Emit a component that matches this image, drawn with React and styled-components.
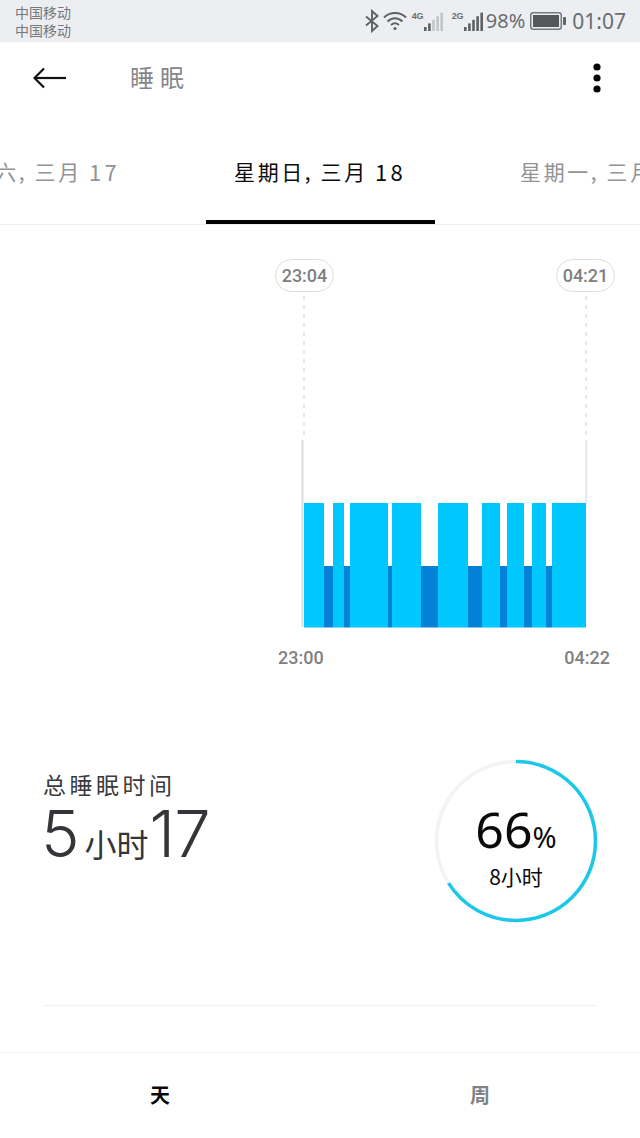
import React from 'react';
import styled, { createGlobalStyle } from 'styled-components';

const CJK = '"Noto Sans CJK SC", "Noto Sans", sans-serif';

const Global = createGlobalStyle`
  html, body { margin: 0; padding: 0; background: #fff; }
  body { font-family: ${CJK}; }
  * { box-sizing: border-box; }
`;

const Page = styled.div`
  width: 640px;
  height: 1138px;
  display: flex;
  flex-direction: column;
  overflow: hidden;
  background: #fff;
`;

/* status bar */
const StatusBar = styled.div`
  height: 42px;
  flex: none;
  background: #eceef1;
  display: flex;
  align-items: center;
  justify-content: space-between;
  padding: 0 14px 0 15px;
  color: #6b6d70;
`;
const Carriers = styled.div`
  display: flex;
  flex-direction: column;
  font-size: 14px;
  line-height: 18px;
  color: #77797c;
`;
const StatusRight = styled.div`
  display: flex;
  align-items: center;
  height: 42px;
`;
const NetLabel = styled.span`
  font-family: "Liberation Sans", sans-serif;
  font-size: 9px;
  font-weight: 700;
  line-height: 9px;
  width: 12px;
  letter-spacing: -0.3px;
  align-self: flex-start;
  margin-top: 12px;
  margin-left: ${p => p.$gap || 0}px;
`;
const Glyph = styled.svg`
  display: block;
  flex: none;
  margin: 0 ${p => p.$mr || 0}px 0 ${p => p.$ml || 0}px;
`;
const Percent = styled.span`
  font-family: "Noto Sans", sans-serif;
  font-size: 20px;
  line-height: 42px;
  margin: 0 5px 0 2px;
`;
const Clock = styled.span`
  font-family: "Noto Sans", sans-serif;
  font-size: 21px;
  line-height: 42px;
  margin-left: 6px;
`;

/* header */
const Header = styled.div`
  height: 73px;
  flex: none;
  display: flex;
  align-items: center;
  padding: 0 39px 2px 33px;
`;
const Title = styled.div`
  margin-left: 64px;
  flex: 1;
  font-size: 24px;
  letter-spacing: 6px;
  line-height: 71px;
  padding-bottom: 2px;
  color: #85878a;
`;

/* date tabs */
const DateStrip = styled.div`
  height: 110px;
  flex: none;
  display: flex;
  justify-content: center;
  border-bottom: 1px solid #efefef;
  overflow: hidden;
`;
const DateTab = styled.div`
  flex: none;
  width: 286px;
  display: flex;
  flex-direction: column;
  align-items: center;
  color: ${p => (p.$active ? '#0c0c0c' : '#919395')};
`;
const DateLabel = styled.div`
  flex: 1;
  display: flex;
  align-items: center;
  padding-top: 7px;
  font-size: 21px;
  letter-spacing: 2.6px;
  white-space: pre;
`;
const DateNum = styled.span`
  font-size: 22px;
  letter-spacing: 3.2px;
`;
const Indicator = styled.div`
  width: 229px;
  height: 4px;
  flex: none;
  background: ${p => (p.$active ? '#000' : 'transparent')};
`;

/* chart */
const ChartSection = styled.div`
  flex: none;
  height: 445px;
  display: flex;
  flex-direction: column;
`;
const PillRow = styled.div`
  margin: 34px 25px 0 275px;
  display: flex;
  justify-content: space-between;
`;
const Pill = styled.div`
  width: 59px;
  height: 33px;
  border: 1px solid #dcdcdc;
  border-radius: 17px;
  display: flex;
  align-items: center;
  justify-content: center;
  font-family: Roboto, sans-serif;
  font-size: 18px;
  font-weight: 500;
  color: #808080;
`;
const ChartSvg = styled.svg`
  display: block;
  margin-left: 296px;
  flex: none;
`;
const AxisRow = styled.div`
  margin: 16px 30px 0 278px;
  display: flex;
  justify-content: space-between;
  font-family: Roboto, sans-serif;
  font-size: 18px;
  font-weight: 500;
  line-height: 24px;
  color: #808080;
`;

/* summary */
const Summary = styled.div`
  flex: none;
  height: 336px;
  margin: 0 43px 0 44px;
  padding-top: 88px;
  display: flex;
  justify-content: space-between;
  align-items: flex-start;
  border-bottom: 1px solid #f1f1f1;
`;
const SummaryText = styled.div`
  display: flex;
  flex-direction: column;
  padding-top: 10px;
`;
const SummaryLabel = styled.div`
  font-size: 23px;
  line-height: 32px;
  letter-spacing: 3.5px;
  margin-left: -1px;
  color: #3a3b3d;
`;
const Duration = styled.div`
  display: flex;
  align-items: baseline;
  height: 66px;
  color: #333538;
  margin: 1px 0 0 -3px;
`;
const BigNum = styled.span`
  font-family: Inter, sans-serif;
  font-weight: 300;
  font-size: 65px;
  line-height: 66px;
  letter-spacing: -1px;
`;
const Unit = styled.span`
  font-size: 32px;
  line-height: 66px;
  margin: 0 1px 0 6px;
`;
const Ring = styled.div`
  display: grid;
  width: 164px;
  height: 164px;
  margin-right: -1px;
  margin-top: 1px;
`;
const RingSvg = styled.svg`
  grid-area: 1 / 1;
  display: block;
`;
const RingText = styled.div`
  grid-area: 1 / 1;
  display: flex;
  flex-direction: column;
  align-items: center;
  justify-content: center;
  padding-top: 8px;
  color: #0a0a0a;
`;
const RingValue = styled.div`
  display: flex;
  align-items: baseline;
  font-family: "Noto Sans", sans-serif;
  height: 58px;
  font-size: 50px;
  line-height: 58px;
`;
const RingPct = styled.span`
  font-size: 29px;
`;
const RingGoal = styled.div`
  font-size: 21px;
  line-height: 30px;
  margin-top: 3px;
`;

/* bottom tabs */
const BottomTabs = styled.div`
  margin-top: 46px;
  flex: 1;
  display: flex;
  border-top: 1px solid #f3f3f3;
`;
const BottomTab = styled.div`
  flex: 1;
  display: flex;
  align-items: center;
  justify-content: center;
  height: 82px;
  font-size: 20px;
  font-weight: 700;
  color: ${p => (p.$active ? '#0a0a0a' : '#808285')};
`;

const SignalBars = ({ lit }) => (
  <Glyph width="20" height="20" viewBox="0 0 20 20">
    {[0, 1, 2, 3, 4].map(i => {
      const h = 4 + i * 3.6;
      return (
        <rect
          key={i}
          x={i * 4.1}
          y={20 - h}
          width="2.6"
          height={h}
          fill={i < lit ? '#5f6164' : '#c3c5c8'}
        />
      );
    })}
  </Glyph>
);

const bars = [
  [304, 324], [333, 344], [350, 388], [392, 421], [438, 468],
  [482, 500], [507, 524], [532, 546], [552, 586],
];
const deep = [
  [324, 333], [344, 350], [388, 392], [421, 438], [468, 482],
  [500, 507], [524, 532], [546, 552],
];

export default function App() {
  const r = 79.5;
  const c = 2 * Math.PI * r;
  return (
    <Page>
      <Global />
      <StatusBar>
        <Carriers>
          <span>中国移动</span>
          <span>中国移动</span>
        </Carriers>
        <StatusRight>
          <Glyph width="16" height="24" viewBox="0 0 16 24" fill="none" stroke="#5f6164" strokeWidth="1.9" $ml={2}>
            <path d="M2 7.5 13.5 17 8 22V2l5.5 5L2 16.5" />
          </Glyph>
          <Glyph width="24" height="22" viewBox="0 0 24 22" fill="none" stroke="#5f6164" strokeWidth="2" $ml={3} $mr={5}>
            <path d="M1 7.5C7 1.5 17 1.5 23 7.5" />
            <path d="M4.5 11.5C9 7.2 15 7.2 19.5 11.5" />
            <path d="M8 15C10.5 12.8 13.5 12.8 16 15" />
            <circle cx="12" cy="18.5" r="1.6" fill="#5f6164" stroke="none" />
          </Glyph>
          <NetLabel>4G</NetLabel>
          <SignalBars lit={2} />
          <NetLabel $gap={8}>2G</NetLabel>
          <SignalBars lit={5} />
          <Percent>98%</Percent>
          <Glyph width="36" height="18" viewBox="0 0 36 18">
            <rect x="0.75" y="0.75" width="30.5" height="16.5" rx="2.5" fill="none" stroke="#77797c" strokeWidth="1.5" />
            <rect x="3" y="3" width="26" height="12" fill="#55575a" />
            <rect x="33" y="5" width="3" height="8" rx="1" fill="#5f6164" />
          </Glyph>
          <Clock>01:07</Clock>
        </StatusRight>
      </StatusBar>

      <Header>
        <Glyph width="33" height="24" viewBox="0 0 33 24" fill="none" stroke="#111" strokeWidth="2.2">
          <path d="M1.5 12H33" />
          <path d="M11 2.5 1.5 12l9.5 9.5" />
        </Glyph>
        <Title>睡眠</Title>
        <Glyph width="8" height="30" viewBox="0 0 8 30" fill="#050505">
          <circle cx="4" cy="4" r="3.6" />
          <circle cx="4" cy="15" r="3.6" />
          <circle cx="4" cy="26" r="3.6" />
        </Glyph>
      </Header>

      <DateStrip>
        <DateTab>
          <DateLabel>星期六, 三月 <DateNum>17</DateNum></DateLabel>
          <Indicator />
        </DateTab>
        <DateTab $active>
          <DateLabel>星期日, 三月 <DateNum>18</DateNum></DateLabel>
          <Indicator $active />
        </DateTab>
        <DateTab>
          <DateLabel>星期一, 三月 <DateNum>19</DateNum></DateLabel>
          <Indicator />
        </DateTab>
      </DateStrip>

      <ChartSection>
        <PillRow>
          <Pill>23:04</Pill>
          <Pill>04:21</Pill>
        </PillRow>
        <ChartSvg width="294" height="338" viewBox="296 292 294 338">
          <line x1="304" y1="296" x2="304" y2="440" stroke="#dedede" strokeWidth="1.5" strokeDasharray="4 5" />
          <line x1="586" y1="296" x2="586" y2="440" stroke="#dedede" strokeWidth="1.5" strokeDasharray="4 5" />
          <rect x="301.5" y="440" width="2" height="187" fill="#dcdcdc" />
          <rect x="585.5" y="440" width="1.5" height="63" fill="#e2e2e2" />
          {bars.map(([a, b]) => (
            <rect key={a} x={a} y="503" width={b - a} height="124.5" fill="#00c8ff" />
          ))}
          {deep.map(([a, b]) => (
            <rect key={a} x={a} y="566" width={b - a} height="61.5" fill="#0480d8" />
          ))}
        </ChartSvg>
        <AxisRow>
          <span>23:00</span>
          <span>04:22</span>
        </AxisRow>
      </ChartSection>

      <Summary>
        <SummaryText>
          <SummaryLabel>总睡眠时间</SummaryLabel>
          <Duration>
            <BigNum>5</BigNum>
            <Unit>小时</Unit>
            <BigNum>17</BigNum>
          </Duration>
        </SummaryText>
        <Ring>
          <RingSvg width="164" height="164" viewBox="0 0 164 164" fill="none" strokeWidth="3.5">
            <circle cx="82" cy="82" r={r} stroke="#f3f3f3" />
            <circle
              cx="82"
              cy="82"
              r={r}
              stroke="#1cc8ea"
              strokeDasharray={`${c * 0.66} ${c}`}
              transform="rotate(-90 82 82)"
            />
          </RingSvg>
          <RingText>
            <RingValue>
              66<RingPct>%</RingPct>
            </RingValue>
            <RingGoal>8小时</RingGoal>
          </RingText>
        </Ring>
      </Summary>

      <BottomTabs>
        <BottomTab $active>天</BottomTab>
        <BottomTab>周</BottomTab>
      </BottomTabs>
    </Page>
  );
}
